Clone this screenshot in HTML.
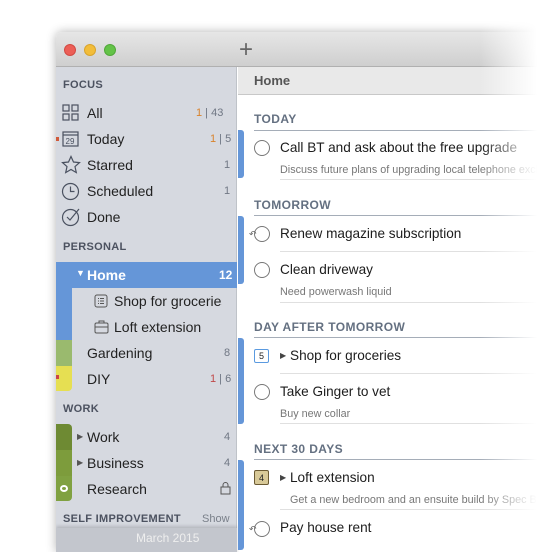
<!DOCTYPE html>
<html><head><meta charset="utf-8"><style>
*{margin:0;padding:0;box-sizing:border-box}
body{width:547px;height:540px;background:#fff;position:relative;overflow:hidden;font-family:"Liberation Sans",sans-serif}
.a{position:absolute;white-space:nowrap}
#win{position:absolute;left:56px;top:32px;width:520px;height:520px;border-radius:6px 6px 0 0;overflow:hidden;box-shadow:0 0 10px rgba(0,0,0,.3);background:#fff}
.tb{left:0;top:0;width:520px;height:35px;background:linear-gradient(#e6e6e6,#cfcfcf);border-bottom:1px solid #b0b0b0}
.dot{width:12px;height:12px;border-radius:50%;top:12px}
.sb{left:0;top:35px;width:181px;height:500px;background:#d6d9e0;border-right:1px solid #bfc3c9}
.sh{font-size:11px;font-weight:bold;color:#4c5260;letter-spacing:.3px}
.si{font-size:14px;color:#222}
.cnt{font-size:11px;color:#707784;text-align:right}
.ti{font-size:13.6px;color:#1c1c1c}
.no{font-size:10.8px;color:#777}
.hd{font-size:12px;font-weight:bold;color:#647081;letter-spacing:.4px}
.ln{height:1px;background:#e0e0e0}
.hl{height:1px;background:#a5adb8}
.circ{width:16px;height:16px;border-radius:50%;border:1.2px solid #777}
.bar{width:6px;background:#6596d8;border-radius:0 3px 3px 0}
</style></head><body>
<div id="win">
<div class="a tb"></div>
<div class="a dot" style="left:8px;background:#ec5f57;border:1px solid #d24a43"></div>
<div class="a dot" style="left:28px;background:#f2bd3a;border:1px solid #d9a42c"></div>
<div class="a dot" style="left:48px;background:#64c348;border:1px solid #51a83a"></div>
<div class="a" style="left:183px;top:4px;font-size:24px;color:#666;font-weight:300">+</div>
<div class="a" style="left:182px;top:35px;width:340px;height:28px;background:#e9e9e9;border-bottom:1px solid #c8c8c8"></div>
<div class="a" style="left:198px;top:41px;font-size:13px;font-weight:bold;color:#555">Home</div>

<div class="a sb"></div>
<div class="a sh" style="left:7px;top:47px">FOCUS</div>
<svg class="a" style="left:6px;top:72px" width="18" height="18" fill="none" stroke="#4a5160" stroke-width="1.2"><rect x="1" y="1" width="6" height="6"/><rect x="10" y="1" width="6" height="6"/><rect x="1" y="10" width="6" height="6"/><rect x="10" y="10" width="6" height="6"/></svg>
<div class="a si" style="left:31px;top:73px">All</div>
<div class="a cnt" style="left:140px;top:75px"><span style="color:#d9822b">1</span> | 43</div>
<svg class="a" style="left:6px;top:98px" width="18" height="18" fill="none" stroke="#4a5160" stroke-width="1.2"><rect x="1" y="2" width="15" height="14"/><line x1="1" y1="5" x2="16" y2="5"/><text x="3.5" y="14" font-size="8" fill="#4a5160" stroke="none" font-family="Liberation Sans">29</text></svg>
<div class="a" style="left:0;top:105px;width:3px;height:4px;background:#d05a3a"></div>
<div class="a si" style="left:31px;top:99px">Today</div>
<div class="a cnt" style="left:154px;top:101px"><span style="color:#d9822b">1</span> | 5</div>
<svg class="a" style="left:5px;top:123px" width="20" height="20" fill="none" stroke="#4a5160" stroke-width="1.2"><path d="M10 1.5l2.5 5.5 6 .6-4.5 4 1.3 6-5.3-3.1-5.3 3.1 1.3-6-4.5-4 6-.6z"/></svg>
<div class="a si" style="left:31px;top:125px">Starred</div>
<div class="a cnt" style="left:168px;top:127px">1</div>
<svg class="a" style="left:5px;top:150px" width="19" height="19" fill="none" stroke="#4a5160" stroke-width="1.2"><circle cx="9.5" cy="9.5" r="8"/><path d="M9.5 4.5v5h4"/></svg>
<div class="a si" style="left:31px;top:151px">Scheduled</div>
<div class="a cnt" style="left:168px;top:153px">1</div>
<svg class="a" style="left:5px;top:175px" width="21" height="20" fill="none" stroke="#4a5160" stroke-width="1.2"><circle cx="9.5" cy="10.5" r="8"/><path d="M6 10l3 3 9-11"/></svg>
<div class="a si" style="left:31px;top:177px">Done</div>
<div class="a sh" style="left:7px;top:209px">PERSONAL</div>

<div class="a" style="left:0;top:230px;width:181px;height:26px;background:#6596d8"></div>
<div class="a" style="left:0;top:256px;width:16px;height:52px;background:#6596d8"></div>
<div class="a" style="left:0;top:308px;width:16px;height:26px;background:#9aba6e"></div>
<div class="a" style="left:0;top:334px;width:16px;height:25px;background:#e6df52;border-radius:0 0 4px 0"></div>
<div class="a" style="left:0;top:343px;width:3px;height:4px;background:#c44"></div>
<div class="a" style="left:20px;top:236px;font-size:9px;color:#fff">▼</div>
<div class="a si" style="left:31px;top:235px;color:#fff;font-weight:bold">Home</div>
<div class="a" style="left:163px;top:236px;font-size:12px;color:#fff;font-weight:bold">12</div>
<svg class="a" style="left:38px;top:262px" width="14" height="14" fill="none" stroke="#555" stroke-width="1"><rect x="1" y="1" width="12" height="12" rx="2"/><path d="M4 4.5h1M6 4.5h4M4 7h1M6 7h4M4 9.5h1M6 9.5h4"/></svg>
<div class="a si" style="left:58px;top:261px;width:108px;overflow:hidden">Shop for groceries</div>
<svg class="a" style="left:38px;top:288px" width="15" height="14" fill="none" stroke="#555" stroke-width="1"><rect x="1" y="3" width="13" height="10" rx="1.5"/><path d="M5 3V1h5v2M1 7h13"/></svg>
<div class="a si" style="left:58px;top:287px">Loft extension</div>
<div class="a si" style="left:31px;top:313px">Gardening</div>
<div class="a cnt" style="left:168px;top:315px">8</div>
<div class="a si" style="left:31px;top:339px">DIY</div>
<div class="a cnt" style="left:154px;top:341px"><span style="color:#c04848">1</span> | 6</div>
<div class="a sh" style="left:7px;top:371px">WORK</div>
<div class="a" style="left:0;top:392px;width:16px;height:26px;background:#6e8a33;border-radius:0 4px 0 0"></div>
<div class="a" style="left:0;top:418px;width:16px;height:26px;background:#7d9c3c"></div>
<div class="a" style="left:0;top:444px;width:16px;height:25px;background:#80a141;border-radius:0 0 4px 0"></div>
<div class="a" style="left:4px;top:453px;width:8px;height:7px;border:2px solid #fff;border-radius:50%"></div>
<div class="a" style="left:21px;top:400px;font-size:8px;color:#555">▶</div>
<div class="a si" style="left:31px;top:397px">Work</div>
<div class="a cnt" style="left:168px;top:399px">4</div>
<div class="a" style="left:21px;top:426px;font-size:8px;color:#555">▶</div>
<div class="a si" style="left:31px;top:423px">Business</div>
<div class="a cnt" style="left:168px;top:425px">4</div>
<div class="a si" style="left:31px;top:449px">Research</div>
<svg class="a" style="left:164px;top:449px" width="11" height="14" fill="none" stroke="#555" stroke-width="1"><rect x="1" y="6" width="9" height="7"/><path d="M3 6V4a2.5 2.5 0 015 0v2"/></svg>
<div class="a sh" style="left:7px;top:481px">SELF IMPROVEMENT</div>
<div class="a" style="left:146px;top:481px;font-size:11px;color:#7a808a">Show</div>
<div class="a" style="left:0;top:496px;width:181px;height:30px;background:#c3c6cd;box-shadow:0 -2px 3px rgba(0,0,0,.15)"></div>
<div class="a" style="left:80px;top:499px;font-size:12px;color:#eee">March 2015</div>

<div class="a bar" style="left:182px;top:98px;height:48px"></div>
<div class="a bar" style="left:182px;top:184px;height:68px"></div>
<div class="a bar" style="left:182px;top:306px;height:86px"></div>
<div class="a bar" style="left:182px;top:428px;height:90px"></div>

<div class="a hd" style="left:198px;top:80px">TODAY</div>
<div class="a hl" style="left:198px;top:98px;width:330px"></div>
<div class="a circ" style="left:198px;top:108px"></div>
<div class="a ti" style="left:224px;top:108px">Call BT and ask about the free upgrade</div>
<div class="a no" style="left:224px;top:132px">Discuss future plans of upgrading local telephone exchange</div>
<div class="a ln" style="left:224px;top:147px;width:300px"></div>

<div class="a hd" style="left:198px;top:166px">TOMORROW</div>
<div class="a hl" style="left:198px;top:183px;width:330px"></div>
<div class="a circ" style="left:198px;top:194px"></div>
<div class="a" style="left:193px;top:197px;font-size:9px;color:#666">↶</div>
<div class="a ti" style="left:224px;top:194px">Renew magazine subscription</div>
<div class="a ln" style="left:224px;top:219px;width:300px"></div>
<div class="a circ" style="left:198px;top:230px"></div>
<div class="a ti" style="left:224px;top:230px">Clean driveway</div>
<div class="a no" style="left:224px;top:254px">Need powerwash liquid</div>
<div class="a ln" style="left:224px;top:270px;width:300px"></div>

<div class="a hd" style="left:198px;top:288px">DAY AFTER TOMORROW</div>
<div class="a hl" style="left:198px;top:305px;width:330px"></div>
<div class="a" style="left:198px;top:317px;width:15px;height:14px;border:1px solid #5a9ae0;border-radius:2px;font-size:9px;text-align:center;line-height:12px;color:#222">5</div>
<div class="a" style="left:224px;top:319px;font-size:8px;color:#444">▶</div>
<div class="a ti" style="left:234px;top:316px">Shop for groceries</div>
<div class="a ln" style="left:224px;top:341px;width:300px"></div>
<div class="a circ" style="left:198px;top:352px"></div>
<div class="a ti" style="left:224px;top:352px">Take Ginger to vet</div>
<div class="a no" style="left:224px;top:376px">Buy new collar</div>
<div class="a ln" style="left:224px;top:391px;width:300px"></div>

<div class="a hd" style="left:198px;top:410px">NEXT 30 DAYS</div>
<div class="a hl" style="left:198px;top:427px;width:330px"></div>
<div class="a" style="left:198px;top:438px;width:15px;height:15px;border:1px solid #6b5a33;border-radius:2px;background:#d8c998;font-size:9px;text-align:center;line-height:14px;color:#222">4</div>
<div class="a" style="left:224px;top:441px;font-size:8px;color:#444">▶</div>
<div class="a ti" style="left:234px;top:438px">Loft extension</div>
<div class="a no" style="left:234px;top:462px">Get a new bedroom and an ensuite build by Spec Builders</div>
<div class="a ln" style="left:224px;top:477px;width:300px"></div>
<div class="a circ" style="left:198px;top:489px"></div>
<div class="a" style="left:193px;top:492px;font-size:9px;color:#666">↶</div>
<div class="a ti" style="left:224px;top:488px">Pay house rent</div>
</div>
<div class="a" style="left:480px;top:0;width:67px;height:540px;background:linear-gradient(90deg,rgba(255,255,255,0),#fff 85%)"></div>
</body></html>
